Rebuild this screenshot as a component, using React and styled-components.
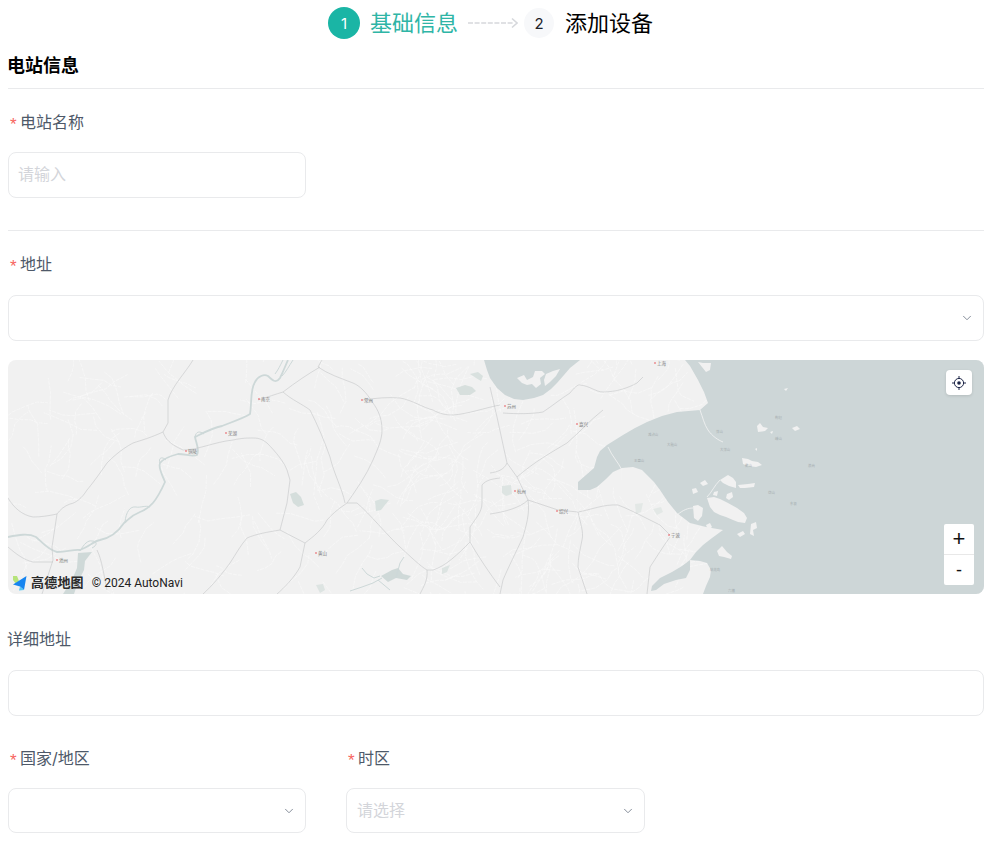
import React from "react"
import styled, { createGlobalStyle } from "styled-components"
import { ChevronDown } from "lucide-react"

const FONT = `Inter, "Noto Sans CJK SC", sans-serif`

const GlobalStyle = createGlobalStyle`
  html, body {
    margin: 0;
    padding: 0;
    background: #fff;
    font-family: ${FONT};
  }
`

const Page = styled.div`
  width: 989px;
  height: 842px;
  overflow: hidden;
  padding: 7px 5px 0 8px;
  box-sizing: border-box;
`

const Stepper = styled.div`
  display: flex;
  align-items: center;
  justify-content: center;
  height: 32px;
  padding-right: 11px;
`

const StepBadge = styled.span`
  width: ${props => (props.$active ? "32px" : "30px")};
  height: ${props => (props.$active ? "32px" : "30px")};
  border-radius: 50%;
  display: flex;
  align-items: center;
  justify-content: center;
  font-size: 15px;
  color: ${props => (props.$active ? "#fff" : "#1d2129")};
  background: ${props => (props.$active ? "#1ab5a5" : "#f7f8fa")};
`

const StepTitle = styled.span`
  font-size: 22px;
  line-height: 32px;
  margin-left: ${props => (props.$active ? "10px" : "11px")};
  color: ${props => (props.$active ? "#2fb5a6" : "#000")};
`

const StepArrow = styled.svg`
  width: 50px;
  height: 12px;
  margin: 0 6px 0 10px;
  display: block;
`

const SectionTitle = styled.h2`
  margin: 15px 0 0 -1px;
  font-size: 18px;
  line-height: 24px;
  font-weight: 700;
  color: #000;
`

const Divider = styled.div`
  height: 1px;
  background: #e9eaec;
  margin-top: ${props => props.$top || 0}px;
`

const Label = styled.div`
  display: flex;
  align-items: center;
  height: 24px;
  box-sizing: border-box;
  padding-bottom: 2px;
  font-size: 16px;
  color: #4e5969;
  margin-top: ${props => props.$top}px;
  margin-bottom: ${props => props.$bottom}px;
  margin-left: ${props => (props.$plain ? "-1px" : "0")};
`

const Star = styled.span`
  width: 12px;
  padding-left: 2px;
  box-sizing: border-box;
  font-size: 17px;
  line-height: 24px;
  position: relative;
  top: 4px;
  color: #f76560;
  font-family: "Liberation Sans", sans-serif;
`

const Field = styled.div`
  display: flex;
  align-items: center;
  justify-content: space-between;
  width: ${props => props.$width || "100%"};
  height: ${props => props.$height || 46}px;
  box-sizing: border-box;
  padding: 0 9px 0 10px;
  border: 1px solid #e9eaec;
  border-radius: 8px;
  background: #fff;
`

const Placeholder = styled.span`
  font-size: 16px;
  line-height: 24px;
  padding-bottom: ${props => (props.$select ? "1px" : "3px")};
  margin-left: ${props => (props.$select ? "0" : "-1px")};
  color: #d3d5da;
`

const Arrow = styled(ChevronDown)`
  width: 14px;
  height: 14px;
  margin-left: auto;
  color: #7d8592;
  stroke-width: 1.6;
`

const MapBox = styled.div`
  position: relative;
  height: 234px;
  margin-top: 19px;
  border-radius: 8px;
  overflow: hidden;
  background: #f1f1f1;
`

const MapDrawing = styled.svg`
  display: block;
  width: 100%;
  height: 100%;
`

const LocateButton = styled.button`
  position: absolute;
  top: 10px;
  right: 12px;
  width: 26px;
  height: 25px;
  padding: 0;
  border: 0;
  border-radius: 4px;
  background: #fff;
  box-shadow: 0 1px 3px rgba(0, 0, 0, 0.12);
  display: flex;
  align-items: center;
  justify-content: center;
`

const ZoomControl = styled.div`
  position: absolute;
  right: 10px;
  bottom: 9px;
  width: 30px;
  border-radius: 2px;
  overflow: hidden;
  background: #fff;
`

const ZoomButton = styled.div`
  height: 30px;
  display: flex;
  align-items: center;
  justify-content: center;
  font-size: ${props => (props.$big ? "22px" : "18px")};
  line-height: 1;
  color: #111;
  font-family: "Liberation Sans", sans-serif;
  & + & {
    border-top: 1px solid #e8e8e8;
  }
`

const Brand = styled.div`
  position: absolute;
  left: 4px;
  bottom: 2px;
  display: flex;
  align-items: center;
  height: 18px;
`

const BrandName = styled.span`
  margin-left: 3px;
  padding-bottom: 3px;
  font-size: 13px;
  font-weight: 600;
  letter-spacing: 0.2px;
  color: #2a2a2a;
`

const Copyright = styled.span`
  margin-left: 8px;
  font-size: 12px;
  font-family: Roboto, "Liberation Sans", sans-serif;
  color: #222;
`

const TwoCols = styled.div`
  display: flex;
  gap: 40px;
`

const Col = styled.div`
  width: ${props => props.$width}px;
`

// page coordinates, the svg viewBox starts at the map's top left corner
const sea =
  "M685 360 L690 366 698 380 704 392 708 403 700 410 677 412 662 416 647 422 635 428 623 435 607 445 600 451 597 457 594 468 586 475 578 482 578 490 590 490 597 487 606 479 613 472 622 468 633 467 642 470 647 475 654 482 660 490 668 502 677 513 690 523 706 527 723 530 712 538 703 545 696 552 690 560 700 561 707 563 711 570 710 577 706 586 703 594 984 594 984 360 Z"
const taihu =
  "M484 360 L487 370 490 378 497 388 505 395 514 399 523 400 534 398 543 395 551 389 557 383 564 375 570 368 580 360 Z"
const inlet =
  "M690 560 L682 566 672 572 660 578 652 586 651 591 656 590 664 584 676 580 686 578 690 570 Z"

const landPatches = [
  "M517 378 L524 375 527 380 533 377 535 371 542 371 545 374 540 378 541 384 536 388 532 384 527 385 522 383 Z",
  "M546 374 L553 371 560 369 556 376 550 382 545 386 544 380 Z",
  "M698 362 L703 363 711 363 710 370 706 372 702 367 Z",
  "M757 426 L760 423 763 427 768 428 765 431 758 432 Z",
  "M792 428 L797 426 800 429 795 431 Z",
  "M742 458 L748 459 752 461 758 462 762 465 756 467 748 466 743 464 Z",
  "M720 480 L728 475 733 478 736 482 736 488 729 486 723 483 Z",
  "M738 485 L748 484 755 483 754 487 745 488 740 488 Z",
  "M707 498 L714 497 720 499 728 503 737 508 744 513 747 518 745 523 738 522 733 520 726 517 720 515 714 512 710 507 Z",
  "M693 506 L698 505 703 508 702 516 698 521 694 518 Z",
  "M727 494 L732 492 733 497 729 500 726 498 Z",
  "M714 492 L718 491 717 496 713 495 Z",
  "M706 525 L710 523 712 527 708 530 Z",
  "M751 524 L756 522 757 528 753 530 754 536 750 534 Z",
  "M717 551 L722 546 727 552 732 556 731 559 724 557 719 556 Z",
  "M737 534 L743 531 745 534 740 537 Z",
  "M692 489 L696 488 698 492 693 494 Z",
  "M700 483 L705 480 708 484 703 486 Z",
  "M755 449 L757 448 757 451 Z",
  "M784 389 L788 388 786 391 Z",
  "M770 432 L773 431 772 434 Z",
]

const lakes = [
  { d: "M290 494 L296 492 301 497 304 505 298 507 293 503 Z", fill: "#d5dedc" },
  { d: "M375 501 L381 499 389 500 385 505 381 510 376 511 Z", fill: "#d8e1df" },
  { d: "M456 388 L465 385 472 387 476 391 470 395 460 395 Z", fill: "#d7dfdd" },
  { d: "M470 374 L478 372 483 376 481 381 476 378 Z", fill: "#d9e1df" },
  { d: "M78 553 L92 552 85 561 84 570 78 582 74 594 63 594 72 580 77 568 Z", fill: "#cfd9d8" },
  { d: "M381 576 L392 570 398 568 403 574 411 576 407 580 396 578 388 582 Z", fill: "#cfd9d8" },
  { d: "M316 585 L323 584 325 590 320 593 Z", fill: "#dde4e2" },
  { d: "M502 486 L511 485 512 494 506 496 502 493 Z", fill: "#dde4e2" },
  { d: "M635 504 L643 503 641 512 636 514 Z", fill: "#e3e8e6" },
  { d: "M653 509 L661 507 663 512 657 515 Z", fill: "#e3e8e6" },
  { d: "M442 568 L450 565 447 572 442 574 Z", fill: "#dde4e2" },
]

const rivers = [
  "M8 537 C18 535 28 533 36 537 C42 542 48 550 57 552 C68 552 74 549 80 550 C90 546 94 541 100 540 C110 538 118 532 124 523 C128 520 130 516 140 512 C150 508 156 502 165 482 C162 474 158 468 160 463 C164 458 170 456 178 454 C186 454 192 457 197 455 C200 450 196 443 195 437 C203 433 212 428 222 426 C232 422 244 418 250 414 C252 402 250 390 255 382 C258 376 264 374 268 376 C272 380 276 384 280 378 C284 370 286 364 288 360",
  "M80 551 C84 544 88 540 92 541 C97 541 98 545 92 548",
  "M125 522 C126 512 130 506 136 507 C140 508 146 505 150 507",
  "M160 463 C158 458 162 456 166 460",
  "M195 437 C196 431 200 431 204 434",
  "M283 360 C280 366 278 370 275 374",
  "M293 360 C289 366 286 372 282 376",
  "M350 591 L362 587 373 583 382 578",
  "M362 568 L367 574 374 578 380 576",
  "M396 578 L400 563 404 557",
  "M378 580 L390 590",
]

const roads = [
  "M193 360 C186 372 172 386 168 400 L168 423 L163 432 C150 438 142 440 133 443 C120 450 112 458 107 463 C98 476 92 484 87 490 C82 498 76 503 70 504 C64 506 60 510 57 514 C48 516 40 517 33 517 C22 515 14 508 8 498",
  "M163 432 C166 440 170 444 183 450 C198 450 214 442 233 440 C242 438 248 438 253 438 C260 438 263 440 267 443 C276 452 284 462 287 470 L290 480 L287 503 L280 530 L305 543 C314 536 322 530 327 520 C334 512 340 508 347 503 C356 490 366 476 373 460 C378 448 382 440 382 430 C382 418 378 410 373 403 C366 392 360 386 353 383 C340 378 328 374 318 367 L322 360",
  "M283 392 C292 400 302 404 310 410 C318 426 324 440 330 457 C334 474 342 488 345 503",
  "M258 400 C268 397 276 394 283 392 C296 382 308 374 320 367",
  "M347 503 L357 503 C370 514 386 534 400 547 C410 556 420 566 427 570 L433 570 C446 566 458 554 470 542 L470 527 C476 518 482 512 482 503 L482 485 C486 480 492 479 500 478",
  "M280 530 C268 532 256 534 247 538 C240 546 236 554 230 563 C222 574 212 586 203 594",
  "M305 543 L300 567 C294 578 284 588 277 594",
  "M363 400 C376 398 388 397 400 398 C412 400 424 408 433 410 C440 414 446 415 453 415 C468 414 484 408 500 405",
  "M470 542 C478 556 490 574 500 587",
  "M57 514 L52 547 L53 560 L42 594",
  "M8 547 C16 554 24 560 33 562 L53 562",
  "M97 550 C102 560 104 576 107 590",
  "M490 387 L497 417 L507 463 L517 477 L528 500 L558 510 L578 512 C590 510 604 504 618 505 C626 508 634 512 640 515 L660 525 L670 535",
  "M517 477 C534 462 552 452 567 443 C580 432 590 420 603 410",
  "M503 413 C516 414 532 414 543 412 C552 406 562 398 570 393 C574 388 578 384 580 385 C590 386 596 392 603 392 C616 392 628 388 637 383 L643 377",
  "M528 500 C530 514 526 526 523 537 C516 552 508 568 503 580 L500 594",
  "M578 512 C580 522 584 532 582 540 C580 550 578 558 578 567 L587 594",
  "M670 537 C662 548 656 558 650 567 L647 594",
  "M490 473 C497 472 504 470 507 463",
  "M490 514 C504 512 520 508 528 500",
  "M427 570 C428 580 424 586 420 594",
]

const bridges = [
  "M700 410 C703 418 704 424 708 430 C712 436 718 440 723 442",
  "M608 447 C612 456 618 462 622 470 L622 480",
  "M720 480 C714 486 712 492 707 497",
  "M677 515 C683 510 688 508 693 508",
  "M578 490 L578 512",
]

// the fine white street net: short broken lines, denser towards the coast
const streets = (() => {
  let seed = 17
  const rnd = () => {
    seed = (seed * 16807) % 2147483647
    return seed / 2147483647
  }
  const list = []
  for (let i = 0; i < 420; i++) {
    const east = i % 5 > 1
    let x = east ? 400 + rnd() * 290 : 8 + rnd() * 440
    let y = 360 + rnd() * 234
    if (x > 570 + (y - 360) * 0.2 && y > 410 && y < 490) continue
    if (x > 484 && x < 570 && y < 398) continue
    let d = `M${x.toFixed(1)} ${y.toFixed(1)}`
    let angle = rnd() * 6.28
    for (let s = 0; s < 4; s++) {
      angle += (rnd() - 0.5) * 1.1
      const len = 5 + rnd() * 12
      x += Math.cos(angle) * len
      y += Math.sin(angle) * len
      d += ` L${x.toFixed(1)} ${y.toFixed(1)}`
    }
    list.push(d)
  }
  return list
})()

const cities = [
  [186, 451, "铜陵"],
  [226, 433, "芜湖"],
  [259, 399, "南京"],
  [362, 400, "常州"],
  [505, 406, "苏州"],
  [577, 424, "嘉兴"],
  [655, 363, "上海"],
  [515, 491, "杭州"],
  [557, 511, "绍兴"],
  [669, 535, "宁波"],
  [316, 553, "黄山"],
  [57, 560, "池州"],
]

const seaLabels = [
  [648, 436, "滩浒山"],
  [667, 446, "大戢山"],
  [634, 462, "王盘山"],
  [716, 433, "洋山"],
  [720, 451, "大洋山"],
  [745, 467, "衢山"],
  [775, 440, "嵊山"],
  [775, 419, "枸杞"],
  [808, 467, "浪岗"],
  [768, 494, "岱山"],
  [790, 505, "东极"],
  [710, 571, "桃花岛"],
  [728, 592, "六横"],
]

const Logo = () => (
  <svg width="16" height="16" viewBox="0 0 16 16">
    <path d="M1 1h4l2 5-3 3-3-4z" fill="#b6e37a" />
    <path d="M1 9.5 14.5 1 12 15 8 11.5z" fill="#1685f0" />
    <path d="M8 11.5 12 15l-5 .5z" fill="#57c6f5" />
  </svg>
)

const Locate = () => (
  <svg width="14" height="14" viewBox="0 0 14 14" fill="none" stroke="#1d2547" strokeWidth="1">
    <circle cx="7" cy="7" r="4.6" />
    <circle cx="7" cy="7" r="1.8" fill="#1d2547" stroke="none" />
    <path d="M7 0v2.4M7 11.6V14M0 7h2.4M11.6 7H14" />
  </svg>
)

const ChinaMap = () => (
  <MapDrawing viewBox="8 360 976 234">
    {streets.map((d, i) => (
      <path key={i} d={d} fill="none" stroke="#fafafa" strokeWidth="0.6" strokeDasharray="4 1" />
    ))}
    {lakes.map(l => (
      <path key={l.d} d={l.d} fill={l.fill} />
    ))}
    <path d={sea} fill="#cdd6d7" />
    <path d={taihu} fill="#cdd6d7" />
    <path d={inlet} fill="#cdd6d7" />
    {landPatches.map(d => (
      <path key={d} d={d} fill="#f1f1f1" />
    ))}
    {rivers.map((d, i) => (
      <path key={i} d={d} fill="none" stroke="#cdd8d8" strokeWidth={i === 0 ? 1.8 : 1} />
    ))}
    {roads.map((d, i) => (
      <path key={i} d={d} fill="none" stroke="#c4c6c8" strokeWidth="0.6" />
    ))}
    {bridges.map((d, i) => (
      <path key={i} d={d} fill="none" stroke="#f4f4f4" strokeWidth="0.8" />
    ))}
    {cities.map(([x, y, name]) => (
      <g key={name}>
        <circle cx={x} cy={y} r="0.8" fill="#e8474f" />
        <text x={x + 2} y={y + 1.5} fontSize="4.5" fill="#777" fontFamily={FONT}>
          {name}
        </text>
      </g>
    ))}
    {seaLabels.map(([x, y, name]) => (
      <text key={name} x={x} y={y} fontSize="3.4" fill="#a5adaf" fontFamily={FONT}>
        {name}
      </text>
    ))}
  </MapDrawing>
)

const App = () => {
  return (
    <>
      <GlobalStyle />
      <Page>
        <Stepper>
          <StepBadge $active>1</StepBadge>
          <StepTitle $active>基础信息</StepTitle>
          <StepArrow viewBox="0 0 50 12" fill="none">
            <path d="M0 6h46" stroke="#d6d8dc" strokeWidth="1.6" strokeDasharray="5 1.6" />
            <path d="M44 1.5 49 6l-5 4.5" stroke="#d6d8dc" strokeWidth="1.6" />
          </StepArrow>
          <StepBadge>2</StepBadge>
          <StepTitle>添加设备</StepTitle>
        </Stepper>

        <SectionTitle>电站信息</SectionTitle>
        <Divider $top={10} />

        <Label $top={21} $bottom={18}>
          <Star>*</Star>电站名称
        </Label>
        <Field $width="298px">
          <Placeholder>请输入</Placeholder>
        </Field>
        <Divider $top={32} />

        <Label $top={21} $bottom={19}>
          <Star>*</Star>地址
        </Label>
        <Field>
          <Arrow />
        </Field>

        <MapBox>
          <ChinaMap />
          <LocateButton>
            <Locate />
          </LocateButton>
          <ZoomControl>
            <ZoomButton $big>+</ZoomButton>
            <ZoomButton>-</ZoomButton>
          </ZoomControl>
          <Brand>
            <Logo />
            <BrandName>高德地图</BrandName>
            <Copyright>© 2024 AutoNavi</Copyright>
          </Brand>
        </MapBox>

        <Label $plain $top={33} $bottom={19}>
          详细地址
        </Label>
        <Field />

        <TwoCols>
          <Col $width={298}>
            <Label $top={30} $bottom={18}>
              <Star>*</Star>国家/地区
            </Label>
            <Field $height={45}>
              <Arrow />
            </Field>
          </Col>
          <Col $width={299}>
            <Label $top={30} $bottom={18}>
              <Star>*</Star>时区
            </Label>
            <Field $height={45}>
              <Placeholder $select>请选择</Placeholder>
              <Arrow />
            </Field>
          </Col>
        </TwoCols>
      </Page>
    </>
  )
}

export default App
